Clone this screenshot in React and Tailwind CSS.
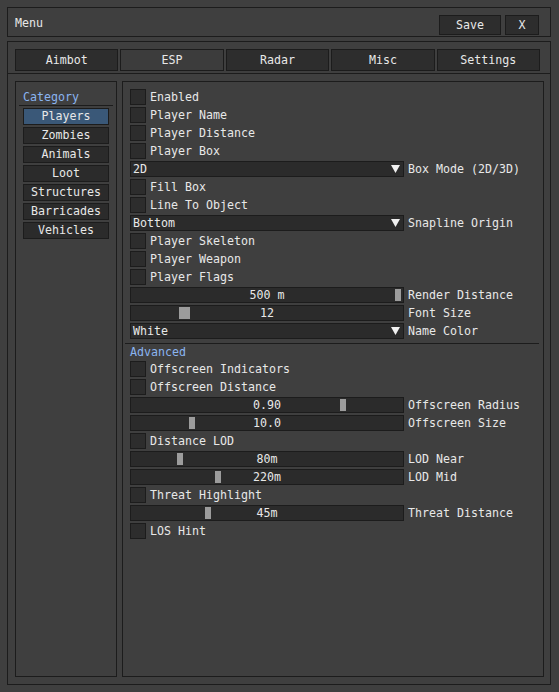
import React from "react";

const tabs = ["Aimbot", "ESP", "Radar", "Misc", "Settings"];
const categories = ["Players", "Zombies", "Animals", "Loot", "Structures", "Barricades", "Vehicles"];

// esp options, top section
const mainRows = [
  { type: "check", label: "Enabled" },
  { type: "check", label: "Player Name" },
  { type: "check", label: "Player Distance" },
  { type: "check", label: "Player Box" },
  { type: "combo", value: "2D", label: "Box Mode (2D/3D)" },
  { type: "check", label: "Fill Box" },
  { type: "check", label: "Line To Object" },
  { type: "combo", value: "Bottom", label: "Snapline Origin" },
  { type: "check", label: "Player Skeleton" },
  { type: "check", label: "Player Weapon" },
  { type: "check", label: "Player Flags" },
  { type: "slider", value: "500 m", label: "Render Distance", grab: 265 },
  { type: "slider", value: "12", label: "Font Size", grab: 49, grabW: 11 },
  { type: "combo", value: "White", label: "Name Color" },
];

const advancedRows = [
  { type: "check", label: "Offscreen Indicators" },
  { type: "check", label: "Offscreen Distance" },
  { type: "slider", value: "0.90", label: "Offscreen Radius", grab: 210 },
  { type: "slider", value: "10.0", label: "Offscreen Size", grab: 59 },
  { type: "check", label: "Distance LOD" },
  { type: "slider", value: "80m", label: "LOD Near", grab: 47 },
  { type: "slider", value: "220m", label: "LOD Mid", grab: 85 },
  { type: "check", label: "Threat Highlight" },
  { type: "slider", value: "45m", label: "Threat Distance", grab: 75 },
  { type: "check", label: "LOS Hint" },
];

function Checkbox({ label }) {
  return (
    <div className="flex items-center h-[16px] gap-[4px]">
      <div className="w-[16px] h-[16px] bg-[#2d2d2d] border border-[#1c1c1c]" />
      <span className="leading-[16px] whitespace-pre">{label}</span>
    </div>
  );
}

function Combo({ value, label }) {
  return (
    <div className="flex items-center h-[16px] gap-[4px]">
      <div className="w-[274px] h-[16px] bg-[#2b2b2b] border border-[#1c1c1c] flex items-center justify-between pl-[2px] pr-[3px]">
        <span className="leading-[14px]">{value}</span>
        <svg width="9" height="8" viewBox="0 0 9 8">
          <polygon points="0,0 9,0 4.5,8" fill="#f0f0f0" />
        </svg>
      </div>
      <span className="leading-[16px] whitespace-pre">{label}</span>
    </div>
  );
}

function Slider({ value, label, grab, grabW = 6 }) {
  return (
    <div className="flex items-center h-[16px] gap-[4px]">
      <div className="relative w-[274px] h-[16px] bg-[#2b2b2b] border border-[#1c1c1c] flex items-center justify-center">
        <div
          className="absolute top-[1px] bottom-[1px] bg-[#9c9c9c]"
          style={{ left: grab - 1, width: grabW }}
        />
        <span className="relative leading-[14px] whitespace-pre">{value}</span>
      </div>
      <span className="leading-[16px] whitespace-pre">{label}</span>
    </div>
  );
}

function Row({ row }) {
  if (row.type === "combo") return <Combo {...row} />;
  if (row.type === "slider") return <Slider {...row} />;
  return <Checkbox {...row} />;
}

export default function App() {
  return (
    <div
      className="w-[559px] h-[692px] bg-[#3f3f3f] pt-[7px] pl-[7px] text-[#e8e8e8] text-[11.63px]"
      style={{ fontFamily: '"DejaVu Sans Mono", "Liberation Mono", monospace' }}
    >
      {/* title bar */}
      <div className="w-[544px] h-[30px] border border-[#1c1c1c] flex items-start justify-between pt-[7px] pl-[7px] pr-[11px]">
        <span className="leading-[15px] pt-[1px]">Menu</span>
        <div className="flex gap-[4px]">
          <button className="w-[62px] h-[20px] bg-[#2d2d2d] border border-[#1c1c1c] flex items-center justify-center leading-none pt-[2px]">
            Save
          </button>
          <button className="w-[34px] h-[20px] bg-[#2d2d2d] border border-[#1c1c1c] flex items-center justify-center leading-none pt-[2px]">
            X
          </button>
        </div>
      </div>

      {/* tabs + content */}
      <div className="mt-[4px] w-[544px] h-[644px] border border-[#1c1c1c] flex flex-col">
        <div className="flex gap-[2px] pl-[7px] pr-[10px] pt-[7px] pb-[2px]">
          {tabs.map((t) => (
            <div
              key={t}
              className={`flex-1 h-[22px] border border-[#1c1c1c] flex items-center justify-center pt-[2px] ${
                t === "ESP" ? "bg-[#3c3c3c]" : "bg-[#2d2d2d]"
              }`}
            >
              {t}
            </div>
          ))}
        </div>

        <div className="flex-1 border-t border-[#1c1c1c] flex p-[7px] pr-[6px] gap-[5px]">
          {/* category list */}
          <div className="w-[102px] border border-[#1c1c1c] flex flex-col pt-[7px]">
            <div className="px-[7px] leading-[15px] pt-[1px] text-[#8ab4f0]">Category</div>
            <div className="mx-[3px] h-px bg-[#1c1c1c]" />
            <div className="mx-[7px] mt-[2px] flex flex-col gap-[2px]">
              {categories.map((c) => (
                <div
                  key={c}
                  className={`h-[17px] border border-[#1c1c1c] flex items-center justify-center ${
                    c === "Players" ? "bg-[#3a5878]" : "bg-[#2b2b2b]"
                  }`}
                >
                  {c}
                </div>
              ))}
            </div>
          </div>

          {/* options */}
          <div className="flex-1 border border-[#1c1c1c] pt-[7px] pl-[7px] pr-[7px] flex flex-col gap-[2px]">
            {mainRows.map((r, i) => (
              <Row key={i} row={r} />
            ))}
            <div className="-ml-[5px] -mr-[3px] mt-[2px] h-px bg-[#1c1c1c]" />
            <div className="h-[13px] leading-[13px] text-[#8ab4f0]">Advanced</div>
            {advancedRows.map((r, i) => (
              <Row key={i} row={r} />
            ))}
          </div>
        </div>
      </div>
    </div>
  );
}
